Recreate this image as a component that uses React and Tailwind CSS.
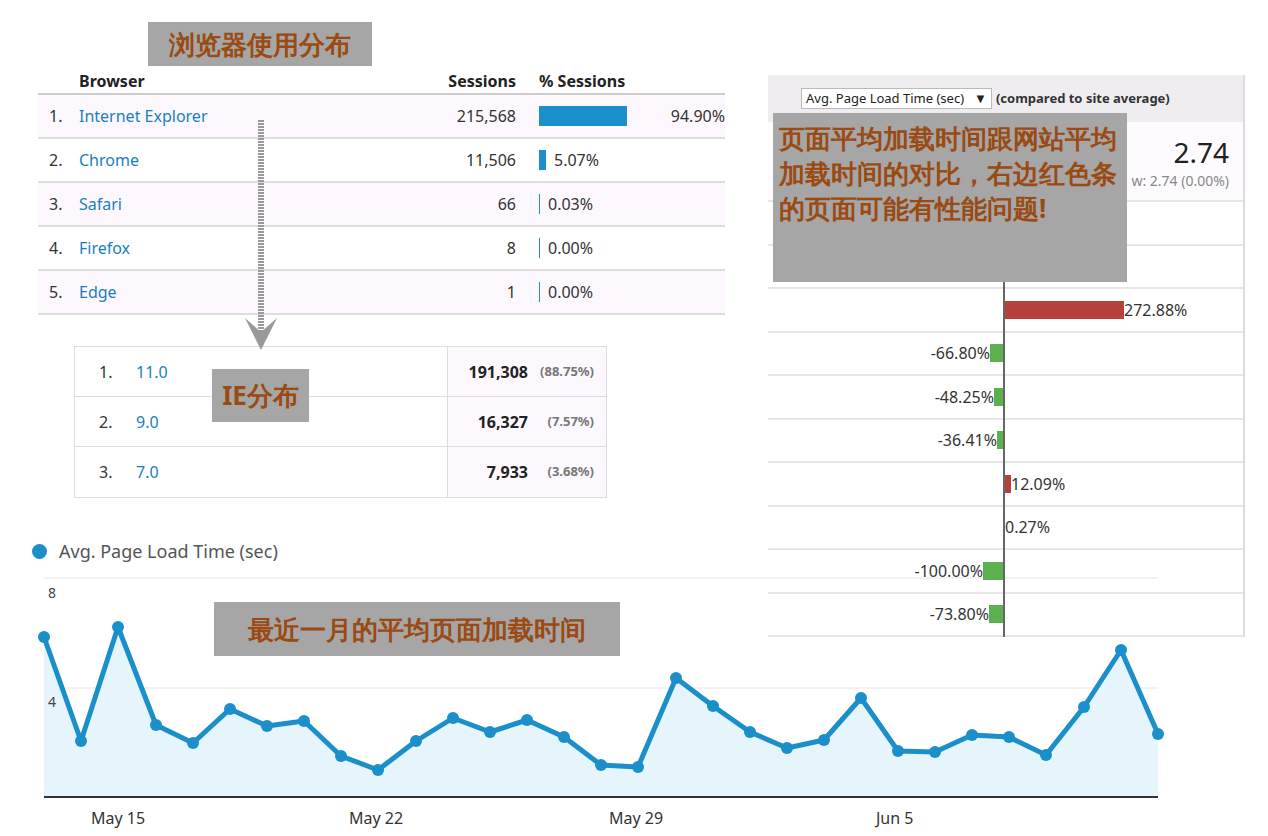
export default function App() {
  const pts = [[44,637],[81,741],[118,627],[156,725],[193,743],[230,709],[267,726],[304,721],[341,756],[378,770],[416,741],[453,718],[490,732],[527,720],[564,737],[601,765],[638,767],[676,678],[713,706],[750,732],[787,748],[824,740],[861,698],[898,751],[935,752],[972,735],[1009,737],[1046,755],[1084,707],[1121,650],[1158,734]];
  const line = pts.map(p => p.join(",")).join(" ");
  const area = `44,797 ${line} 1158,797`;
  const rows = [
    ["1.", "Internet Explorer", "215,568", 131, "94.90%"],
    ["2.", "Chrome", "11,506", 7, "5.07%"],
    ["3.", "Safari", "66", 1, "0.03%"],
    ["4.", "Firefox", "8", 1, "0.00%"],
    ["5.", "Edge", "1", 1, "0.00%"],
  ];
  const ie = [["1.", "11.0", "191,308", "(88.75%)"], ["2.", "9.0", "16,327", "(7.57%)"], ["3.", "7.0", "7,933", "(3.68%)"]];
  const cmp = [[null, 0], [null, 0], ["272.88%", 119], ["-66.80%", -14], ["-48.25%", -10], ["-36.41%", -7], ["12.09%", 6], ["0.27%", 0], ["-100.00%", -21], ["-73.80%", -15]];
  const label = "absolute bg-[#a6a6a6] text-[#9a4a12] font-bold font-['Noto_Sans_CJK_SC',sans-serif]";
  return (
    <div className="relative w-[1268px] h-[836px] bg-white overflow-hidden font-['Liberation_Sans',Arial,sans-serif]">
      {/* chart */}
      <svg className="absolute left-0 top-0" width="1268" height="836">
        <line x1="44" y1="578" x2="1158" y2="578" stroke="#e6e6e6" />
        <line x1="44" y1="688" x2="1158" y2="688" stroke="#e6e6e6" />
        <polygon points={area} fill="#e6f4fc" />
        <polyline points={line} fill="none" stroke="#1b8fc9" strokeWidth="5" strokeLinejoin="round" />
        {pts.map((p, i) => <circle key={i} cx={p[0]} cy={p[1]} r="6" fill="#1b8fc9" />)}
        <line x1="44" y1="797" x2="1158" y2="797" stroke="#333" strokeWidth="2" />
      </svg>
      <div className="absolute left-[48px] top-[582px] text-[14px] text-[#444]">8</div>
      <div className="absolute left-[48px] top-[691px] text-[14px] text-[#444]">4</div>
      {[["May 15", 91], ["May 22", 349], ["May 29", 609], ["Jun 5", 876]].map(([t, x]) => (
        <div key={t} className="absolute top-[806px] text-[16px] text-[#333]" style={{ left: x }}>{t}</div>
      ))}
      <div className="absolute left-[32px] top-[538px] flex items-center gap-[12px] text-[18px] text-[#555]">
        <span className="w-[15px] h-[15px] rounded-full bg-[#1b8fc9]" />Avg. Page Load Time (sec)
      </div>

      {/* browser table */}
      <div className="absolute left-[38px] top-[68px] w-[687px] text-[16px]">
        <div className="flex h-[27px] items-center font-bold text-[#222] border-b-2 border-[#ccc]">
          <div className="w-[41px]" />
          <div className="flex-1">Browser</div>
          <div className="w-[100px] text-right">Sessions</div>
          <div className="w-[209px] pl-[23px]">% Sessions</div>
        </div>
        {rows.map((r, i) => (
          <div key={i} className={`flex h-[44px] items-center border-b-2 border-[#ddd] ${i % 2 === 0 ? "bg-[#fdf8fd]" : "bg-white"}`}>
            <div className="w-[41px] pl-[11px] text-[#333]">{r[0]}</div>
            <div className="flex-1 text-[#1a7fc1]">{r[1]}</div>
            <div className="w-[100px] text-right text-[#333]">{r[2]}</div>
            <div className="w-[209px] pl-[23px] flex items-center text-[#333]">
              <span className={`bg-[#1a8fcb] ${i < 2 ? "h-[20px]" : "h-[20px]"}`} style={{ width: r[3] }} />
              <span className={i === 0 ? "ml-[44px]" : "ml-[8px]"}>{r[4]}</span>
            </div>
          </div>
        ))}
      </div>

      {/* IE table */}
      <div className="absolute left-[74px] top-[346px] w-[533px] border border-[#ddd] text-[16px]">
        {ie.map((r, i) => (
          <div key={i} className={`flex h-[50px] items-center ${i < 2 ? "border-b border-[#ddd]" : ""}`}>
            <div className="w-[372px] flex items-center h-full">
              <span className="w-[61px] pl-[24px] text-[#333]">{r[0]}</span>
              <span className="text-[#1a7fc1]">{r[1]}</span>
            </div>
            <div className="flex-1 h-full flex items-center justify-end pr-[12px] bg-[#fdf8fd] border-l border-[#ddd] gap-[8px]">
              <b className="text-[#222]">{r[2]}</b>
              <span className="text-[13px] text-[#777] font-bold w-[58px] text-right">{r[3]}</span>
            </div>
          </div>
        ))}
      </div>

      {/* arrow */}
      <svg className="absolute left-[240px] top-[118px]" width="44" height="236">
        <line x1="21" y1="2" x2="21" y2="214" stroke="#999" strokeWidth="6" strokeDasharray="2 1" />
        <path d="M5 200 L21 232 L37 200 L21 214 Z" fill="#999" />
      </svg>

      {/* comparison panel */}
      <div className="absolute left-[768px] top-[75px] w-[477px] h-[562px] border-r-2 border-[#ddd] text-[16px]">
        <div className="h-[47px] bg-[#efedf0] flex items-center pl-[33px] gap-[4px] text-[13px]">
          <div className="h-[21px] border border-[#bbb] bg-white px-[4px] flex items-center gap-[10px] text-[#222]">Avg. Page Load Time (sec) <span>▼</span></div>
          <b className="text-[#333]">(compared to site average)</b>
        </div>
        <div className="h-[80px] bg-[#fdfbfd] border-b-2 border-[#e6e6e6] flex flex-col items-end pr-[14px] pt-[12px]">
          <div className="text-[28px] text-[#222] leading-[36px]">2.74</div>
          <div className="text-[14px] text-[#888]">w: 2.74 (0.00%)</div>
        </div>
        <div className="relative">
          <div className="absolute left-[235px] top-0 w-[2px] h-[435px] bg-[#666]" />
          {cmp.map(([t, w], i) => (
            <div key={i} className="h-[43.5px] border-b-2 border-[#e6e6e6] flex items-center">
              {t && w < 0 && (
                <div className="w-[236px] flex justify-end items-center">
                  <span className="text-[#333]">{t}</span>
                  <span className="h-[18px] bg-[#5cb04d]" style={{ width: -w }} />
                </div>
              )}
              {t && w >= 0 && (
                <div className="pl-[237px] flex items-center">
                  <span className="h-[18px] bg-[#b8403a]" style={{ width: w }} />
                  <span className="text-[#333]">{t}</span>
                </div>
              )}
            </div>
          ))}
        </div>
      </div>

      {/* labels */}
      <div className={`${label} left-[148px] top-[22px] w-[224px] h-[44px] flex items-center justify-center text-[26px]`}>浏览器使用分布</div>
      <div className={`${label} left-[212px] top-[369px] w-[97px] h-[53px] flex items-center justify-center text-[26px]`}>IE分布</div>
      <div className={`${label} left-[214px] top-[602px] w-[406px] h-[54px] flex items-center justify-center text-[26px]`}>最近一月的平均页面加载时间</div>
      <div className={`${label} left-[773px] top-[113px] w-[354px] h-[169px] px-[6px] pt-[8px] text-[26px] leading-[35px]`}>页面平均加载时间跟网站平均加载时间的对比，右边红色条的页面可能有性能问题!</div>
    </div>
  );
}
